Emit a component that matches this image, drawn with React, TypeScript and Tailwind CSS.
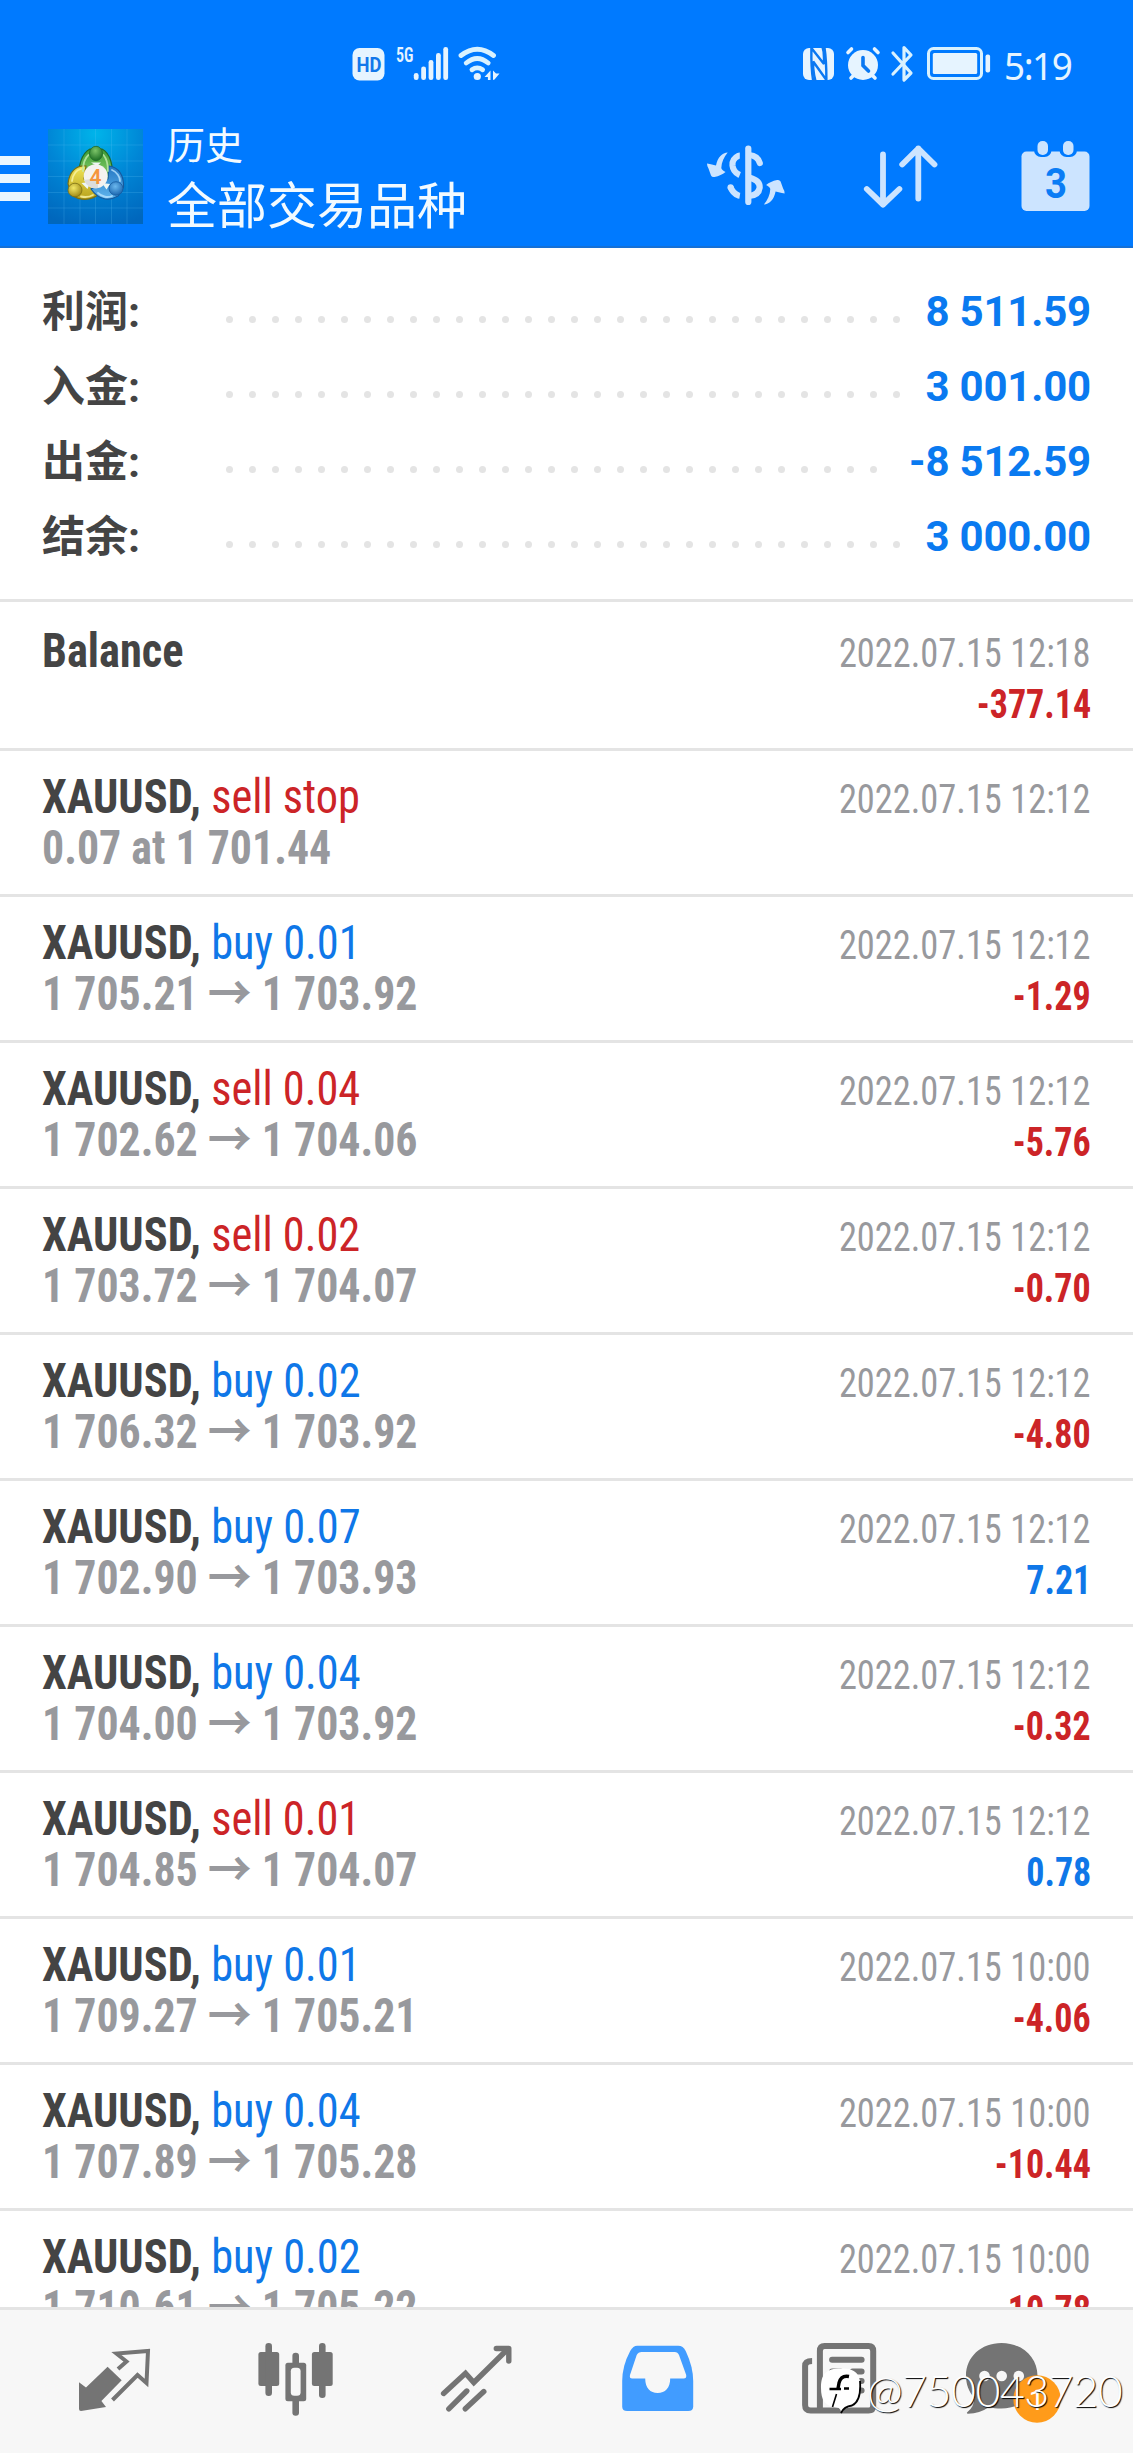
import type { ReactNode } from 'react';
import { clsx } from 'clsx';

type Deal = {
  symbol: string;
  action?: string;
  side?: 'buy' | 'sell';
  from?: string;
  to?: string;
  note?: string;
  time: string;
  profit?: string;
};

const summary = [
  { label: '利润:', value: '8 511.59', dots: 30 },
  { label: '入金:', value: '3 001.00', dots: 30 },
  { label: '出金:', value: '-8 512.59', dots: 29 },
  { label: '结余:', value: '3 000.00', dots: 30 },
];

const deals: Deal[] = [
  { symbol: 'Balance', time: '2022.07.15 12:18', profit: '-377.14' },
  { symbol: 'XAUUSD,', action: 'sell stop', side: 'sell', note: '0.07 at 1 701.44', time: '2022.07.15 12:12' },
  { symbol: 'XAUUSD,', action: 'buy 0.01', side: 'buy', from: '1 705.21', to: '1 703.92', time: '2022.07.15 12:12', profit: '-1.29' },
  { symbol: 'XAUUSD,', action: 'sell 0.04', side: 'sell', from: '1 702.62', to: '1 704.06', time: '2022.07.15 12:12', profit: '-5.76' },
  { symbol: 'XAUUSD,', action: 'sell 0.02', side: 'sell', from: '1 703.72', to: '1 704.07', time: '2022.07.15 12:12', profit: '-0.70' },
  { symbol: 'XAUUSD,', action: 'buy 0.02', side: 'buy', from: '1 706.32', to: '1 703.92', time: '2022.07.15 12:12', profit: '-4.80' },
  { symbol: 'XAUUSD,', action: 'buy 0.07', side: 'buy', from: '1 702.90', to: '1 703.93', time: '2022.07.15 12:12', profit: '7.21' },
  { symbol: 'XAUUSD,', action: 'buy 0.04', side: 'buy', from: '1 704.00', to: '1 703.92', time: '2022.07.15 12:12', profit: '-0.32' },
  { symbol: 'XAUUSD,', action: 'sell 0.01', side: 'sell', from: '1 704.85', to: '1 704.07', time: '2022.07.15 12:12', profit: '0.78' },
  { symbol: 'XAUUSD,', action: 'buy 0.01', side: 'buy', from: '1 709.27', to: '1 705.21', time: '2022.07.15 10:00', profit: '-4.06' },
  { symbol: 'XAUUSD,', action: 'buy 0.04', side: 'buy', from: '1 707.89', to: '1 705.28', time: '2022.07.15 10:00', profit: '-10.44' },
  { symbol: 'XAUUSD,', action: 'buy 0.02', side: 'buy', from: '1 710.61', to: '1 705.22', time: '2022.07.15 10:00', profit: '-10.78' },
];

function StatusBar() {
  return (
    <div className="flex h-[100px] items-start pt-11 pl-[350px]">
      <svg className="h-10 w-[152px]" viewBox="350 44 152 40" fill="#e6f4ff">
        <rect x="352.5" y="48" width="32" height="32.5" rx="7" />
        <text x="356.5" y="72" fontSize="20" fontWeight="700" fontFamily="Roboto" textLength="25" lengthAdjust="spacingAndGlyphs" fill="#1277ea">HD</text>
        <text x="396" y="62" fontSize="21" fontWeight="600" fontFamily="'Roboto Condensed'" textLength="17.5" lengthAdjust="spacingAndGlyphs">5G</text>
        <rect x="413.8" y="73" width="4.8" height="7" rx="2.3" />
        <rect x="421.2" y="66.5" width="4.8" height="13.5" rx="2.3" />
        <rect x="428.6" y="60" width="4.8" height="20" rx="2.3" />
        <rect x="436" y="53" width="4.8" height="27" rx="2.3" />
        <rect x="443.3" y="47" width="4.8" height="33" rx="2.3" />
        <g fill="none" stroke="#d9f2ff" strokeWidth="4.8" strokeLinecap="round">
          <path d="M461 55.5Q477.3 43 493.5 55.5" />
          <path d="M466.2 63Q477.3 54 488.2 63" />
          <path d="M472 69.8Q477.3 66 482.6 69.8" />
        </g>
        <circle cx="477.3" cy="76.5" r="3.6" />
        <path d="M484.5 77l6-6.5v9.5h-2.600v-3zM493 70.5v9.5l1.500-.500 5-6h-3.500z" />
      </svg>
      <svg className="ml-[298px] h-10 w-[192px]" viewBox="800 44 192 40" fill="#e6f4ff">
        <rect x="803" y="48" width="31" height="32" rx="6" />
        <g fill="none" stroke="#0a78f2" strokeWidth="2.4">
          <path d="M813.2 81Q811 68 811.4 48L824 64V58Q824 51 822.5 47" strokeLinejoin="bevel" />
          <path d="M824.4 47Q826.4 60 826.4 80L813.2 61.5V68Q814 76 815.5 81" strokeLinejoin="bevel" />
        </g>
        <circle cx="863" cy="65" r="15" />
        <g fill="none" stroke="#e6f4ff" strokeWidth="3.6" strokeLinecap="round">
          <path d="M848 52.5l3.500-3.500M874.500 49l3.500 3.500M851 78l3-3M875 78l-3-3" />
          <path d="M863 57.500v8l5.500 5.500" stroke="#0a78f2" />
        </g>
        <path d="M893 53L911 73L904 80V47.500L911 55L893 74" fill="none" stroke="#d9f2ff" strokeWidth="3.200" strokeLinecap="round" strokeLinejoin="round" />
        <rect x="928.500" y="48.500" width="53" height="30" rx="5" fill="none" stroke="#d9f2ff" strokeWidth="3" />
        <rect x="932.800" y="53" width="44.400" height="21" rx="1.500" />
        <rect x="985.500" y="54.500" width="4.600" height="18" rx="2" />
      </svg>
      <span className="ml-3 origin-left scale-x-[0.97] font-['Noto_Sans'] text-[38px] leading-[42px] tracking-[-1.5px] text-[#e6f4ff]">5:19</span>
    </div>
  );
}

function AppLogo() {
  return (
    <svg className="size-[95px]" viewBox="0 0 95 95">
      <defs>
        <radialGradient id="logoBg" cx="50%" cy="5%" r="100%">
          <stop offset="0" stopColor="#00b4ea" />
          <stop offset="0.5" stopColor="#0086d6" />
          <stop offset="1" stopColor="#0067bd" />
        </radialGradient>
        <linearGradient id="green" x1="0" y1="0" x2="0" y2="1">
          <stop offset="0" stopColor="#3d9a35" />
          <stop offset="0.5" stopColor="#6fbf5a" />
          <stop offset="1" stopColor="#2c8a34" />
        </linearGradient>
        <linearGradient id="yellow" x1="0" y1="0" x2="0" y2="1">
          <stop offset="0" stopColor="#f0e458" />
          <stop offset="1" stopColor="#b8a21c" />
        </linearGradient>
        <linearGradient id="blue" x1="0" y1="0" x2="0" y2="1">
          <stop offset="0" stopColor="#2477c4" />
          <stop offset="1" stopColor="#5fb4ec" />
        </linearGradient>
        <radialGradient id="greenHead" cx="45%" cy="30%" r="70%">
          <stop offset="0" stopColor="#7cc468" />
          <stop offset="1" stopColor="#1d6e24" />
        </radialGradient>
        <radialGradient id="yellowHead" cx="40%" cy="35%" r="70%">
          <stop offset="0" stopColor="#f2e765" />
          <stop offset="1" stopColor="#9c8512" />
        </radialGradient>
        <radialGradient id="blueHead" cx="45%" cy="35%" r="70%">
          <stop offset="0" stopColor="#6bb8ee" />
          <stop offset="1" stopColor="#1560ab" />
        </radialGradient>
      </defs>
      <rect width="95" height="95" fill="url(#logoBg)" />
      <path d="M16 0v95M32 0v95M47.500 0v95M63.500 0v95M79 0v95M0 16h95M0 32h95M0 47.500h95M0 63.500h95M0 79h95" stroke="#5fc4f5" strokeOpacity="0.22" />
      <path d="M32 50C29 38 34 24 42 20H54C62 24 66.500 38 63 50L47 58Z" fill="url(#green)" stroke="#1f6a2a" strokeWidth="1.200" />
      <path d="M38 37C28 36 21 43 20 55L24 66C32 72 43 72 51 65L46 55L36 50Z" fill="url(#yellow)" stroke="#7c7014" strokeWidth="1.200" />
      <path d="M61 37C71 38 76 47 75.500 58L70 67C60 73 50 70 43 60L50 56L60 50Z" fill="url(#blue)" stroke="#165a9e" strokeWidth="1.200" />
      <g fill="none" strokeWidth="1.800" strokeLinecap="round" strokeOpacity="0.8">
        <path d="M35 42C35 35 37 29 40.500 26M60 42C60 35 58 29 55.500 26" stroke="#c4ecb0" />
        <path d="M24 52C25 45 29 41 33 40M33 67.500Q40 69 45 66" stroke="#fbf5a8" />
        <path d="M64 41C69 43 72 48 72 52M50 64C54 68 60 69 64 67" stroke="#b8e4ff" />
      </g>
      <path d="M33.500 54l9-1-3 7zM54 54l8 1-3.500 5.500zM43 33.500h10l-4 3.500z" fill="#eef6f4" />
      <ellipse cx="48" cy="24.500" rx="6.500" ry="7.200" fill="url(#greenHead)" stroke="#1f6a2a" strokeWidth="0.800" />
      <ellipse cx="27" cy="61" rx="7" ry="6.800" fill="url(#yellowHead)" stroke="#7c7014" strokeWidth="0.800" />
      <ellipse cx="68" cy="59.500" rx="7" ry="6.800" fill="url(#blueHead)" stroke="#165a9e" strokeWidth="0.800" />
      <circle cx="47.700" cy="47.300" r="12" fill="#f4f2f0" />
      <path d="M36 51a12 12 0 0 0 14 8V49z" fill="#dcdcdc" />
      <text x="47.500" y="54.500" textAnchor="middle" fontSize="21" fontWeight="600" fontFamily="Roboto" fill="#f5953c">4</text>
    </svg>
  );
}

function Header() {
  return (
    <header className="h-[248px] shrink-0 border-b-2 border-[#1570d6] bg-[#007aff]">
      <StatusBar />
      <div className="flex h-[146px] items-center pt-[7px] pr-[38px]">
        <button className="mr-[18px] flex w-[30px] flex-col gap-[9px] pt-1">
          <span className="h-[9px] bg-[#eaf6ff]" />
          <span className="h-[9px] bg-[#eaf6ff]" />
          <span className="h-[9px] bg-[#eaf6ff]" />
        </button>
        <AppLogo />
        <div className="ml-6 flex flex-col font-['Noto_Sans_CJK_SC'] text-[#f2faff]">
          <span className="text-[38px] leading-[50px]">历史</span>
          <span className="text-[50px] leading-[68px]">全部交易品种</span>
        </div>
        <div className="ml-auto flex items-center">
          <svg className="h-[76px] w-[88px]" viewBox="702 138.500 88 76">
            <g fill="none" stroke="#cce4ff" strokeWidth="6.200">
              <path d="M748.300 148v53.500" strokeLinecap="round" />
              <path d="M739.800 155Q739 155 738.500 155.300C733 158 732.200 161 732.500 165C733 169.500 735 172 738.500 173.800L739.800 174.300" />
              <path d="M730.500 186.500C732 191 735 193.500 738.500 195L739.800 195.200" />
              <path d="M749 154.500C755 155 758.500 157.500 759.800 162.500" strokeLinecap="round" />
              <path d="M749 177C756.500 179 760 182 759.700 187C759 192.500 755 195 749 195.500" />
            </g>
            <circle cx="730.600" cy="186.800" r="3.100" fill="#cce4ff" />
            <g fill="#cce4ff">
              <path id="swap" d="M727.700 152C722.500 152 717.500 157 716 165C713 164.500 711 163.500 707 163Q707 166 708.500 168L711 175Q712 177 714.500 176.500C719 175.500 722.500 174 725.500 171.500C723 170 721.500 169 721.300 167.500C721.500 161.500 724 156.500 727.700 152Z" />
              <use href="#swap" transform="rotate(180 745.800 178)" />
            </g>
          </svg>
          <svg className="ml-[70px] h-[76px] w-20" viewBox="860 138.500 80 76" fill="none" stroke="#cce4ff" strokeWidth="5.800" strokeLinecap="round" strokeLinejoin="round">
            <path d="M883 154v50M866.800 188.500L883 204.200L899.400 188.500" />
            <path d="M918.300 198v-50M902.200 164L918.300 148L934.500 164" />
          </svg>
          <svg className="ml-[75px] h-[76px] w-20" viewBox="1015 138.500 80 76">
            <rect x="1021.500" y="151" width="68" height="59.500" rx="5" fill="#cce4ff" />
            <rect x="1034" y="138" width="17.500" height="18.500" rx="7" fill="#007aff" />
            <rect x="1059.500" y="138" width="17.500" height="18.500" rx="7" fill="#007aff" />
            <rect x="1037.500" y="140.500" width="10.500" height="14" rx="5" fill="#cce4ff" />
            <rect x="1063" y="140.500" width="10.500" height="14" rx="5" fill="#cce4ff" />
            <text x="1045" y="197.500" fontSize="42" fontWeight="700" fontFamily="Roboto" textLength="22" lengthAdjust="spacingAndGlyphs" fill="#0a7cf5">3</text>
          </svg>
        </div>
      </div>
    </header>
  );
}

function Summary() {
  return (
    <section className="h-[351px] shrink-0 pt-[26px] pr-[42px] pl-[42px] font-['Roboto','Noto_Sans_CJK_SC',sans-serif] font-bold">
      {summary.map(row => (
        <div key={row.label} className="flex h-[75px] items-center leading-[75px]">
          <span className="w-[183.500px] pt-px text-[43px] text-[#444]">{row.label}</span>
          <div className="mt-4 flex gap-4">
            {Array.from({ length: row.dots }, (_, i) => (
              <i key={i} className="size-[7px] rounded-full bg-[#e4e4e4]" />
            ))}
          </div>
          <span className="ml-auto text-[42px] tracking-[-0.2px] whitespace-nowrap text-[#0a7af0]">{row.value}</span>
        </div>
      ))}
    </section>
  );
}

function DealRow({ deal, first }: { deal: Deal; first: boolean }) {
  return (
    <li className={clsx('border-t-3 border-[#e4e4e4] pr-[42px] pl-[42px]', first ? 'h-[149px] pt-[23px]' : 'h-[146px] pt-5')}>
      <div className="flex h-[51px] items-baseline justify-between text-[48px] leading-[51px]">
        <span className="origin-left scale-x-[0.925]">
          <b className="text-[#444]">{deal.symbol}</b>
          {deal.action && (
            <span className={deal.side === 'buy' ? 'text-[#0f77e8]' : 'text-[#cc2427]'}> {deal.action}</span>
          )}
        </span>
        <span className="origin-right scale-x-[0.91] text-[40px] text-[#98999d]">{deal.time}</span>
      </div>
      <div className="flex h-[51px] items-baseline justify-between text-[48px] leading-[51px] font-bold">
        <span className="origin-left scale-x-[0.913] text-[#98999d]">
          {deal.note ?? (!deal.from && '\u00a0')}
          {deal.from && (
            <>
              {deal.from} <span className="font-['Noto_Sans_CJK_SC'] leading-[0]">→</span> {deal.to}
            </>
          )}
        </span>
        <span className={clsx('origin-right scale-x-[0.9] text-[40px]', deal.profit?.startsWith('-') ? 'text-[#cc2427]' : 'text-[#0f77e8]')}>
          {deal.profit}
        </span>
      </div>
    </li>
  );
}

function Tab({ viewBox, children }: { viewBox: string; children: ReactNode }) {
  return (
    <button className="size-20">
      <svg className="size-20 overflow-visible" viewBox={viewBox} fill="#747474">
        {children}
      </svg>
    </button>
  );
}

function TabBar() {
  return (
    <nav className="relative flex h-[146px] shrink-0 items-start justify-between border-t-3 border-[#e4e4e4] bg-[#f7f7f7] px-[75px] pt-[30px]">
      <Tab viewBox="75 2340 80 80">
        <path d="M79 2382.300L86 2387.500L107.600 2366.700L121.700 2380.300L101.400 2401L106 2407L81 2411Q79 2411 79 2409Z" />
        <path d="M118 2369L126.500 2361.500L116.500 2353.500L148 2351L146.500 2383L137.500 2375L112.500 2400" fill="none" stroke="#747474" strokeWidth="4" />
      </Tab>
      <Tab viewBox="255.600 2340 80 80">
        <rect x="258" y="2352" width="20.800" height="34" rx="2.500" />
        <rect x="265" y="2343" width="6.600" height="53" rx="3.200" />
        <rect x="311.500" y="2352" width="20.800" height="34" rx="2.500" />
        <rect x="318.600" y="2343" width="6.600" height="55" rx="3.200" />
        <rect x="292" y="2352.700" width="6.600" height="63" rx="3.200" />
        <rect x="285" y="2362.700" width="20.800" height="38.600" rx="2.500" />
        <rect x="290.400" y="2367.800" width="9.800" height="28" rx="3.500" fill="#f7f7f7" />
      </Tab>
      <Tab viewBox="436.200 2340 80 80">
        <g fill="none" stroke="#747474" strokeWidth="5.400">
          <path d="M443.800 2393.500L465.700 2373.300L474 2382.500L507 2350" strokeLinecap="round" />
          <path d="M496.500 2348.500H509V2361" strokeLinecap="round" strokeLinejoin="round" />
          <path d="M449 2408.800L467 2391M465.500 2408.800L484 2391.500" strokeLinecap="round" />
        </g>
      </Tab>
      <Tab viewBox="616.800 2340 80 80">
        <path d="M637 2345.700H678Q683 2345.700 685.500 2351Q693 2367 693 2381V2406.500Q693 2411 688 2411H627Q622 2411 622 2406.500V2381Q622 2366 630 2351Q633 2345.700 637 2345.700Z" fill="#419cff" />
        <path d="M641.500 2352H674.500Q677.500 2352 678.800 2355L686 2375Q686.500 2378.500 683.500 2378.500H670C670 2388 665 2393 657.500 2393S645 2388 645 2378.500H632Q629 2378.500 629.800 2375L636.500 2355Q638 2352 641.500 2352Z" fill="#f7f7f7" />
      </Tab>
      <Tab viewBox="797.400 2340 80 80">
        <g fill="none" stroke="#747474" strokeWidth="6" strokeLinecap="round">
          <path d="M820.300 2410.500V2351Q820.300 2346 825 2346H869Q873.600 2346 873.600 2351V2406Q873.600 2410.500 869 2410.500H811Q805.500 2410.500 805.500 2405V2366Q805.500 2361 812.500 2361" strokeLinecap="butt" />
          <path d="M832.500 2359.700H862M832.500 2371.500H841M853 2371.500H862M832.500 2381H841M853 2381H862M853 2390.500H862" />
        </g>
      </Tab>
      <Tab viewBox="978 2340 80 80">
        <path d="M1001.500 2343C1022 2343 1037.500 2357 1037.500 2375.700C1037.500 2394 1022 2408.500 1001.500 2408.500C996 2408.500 993 2408 989 2407Q980 2413.500 968 2413.700Q966 2413.500 967.500 2412Q974 2407 974.500 2398C968.500 2391.500 966 2384 966 2375.700C966 2357 981 2343 1001.500 2343Z" />
        <circle cx="984.500" cy="2376" r="5.300" fill="#f7f7f7" />
        <circle cx="1001.700" cy="2376" r="5.300" fill="#f7f7f7" />
        <circle cx="1018.800" cy="2376" r="5.300" fill="#f7f7f7" />
        <circle cx="1037" cy="2399" r="23.700" fill="#ff9b1a" />
        <text x="1036.500" y="2409.500" textAnchor="middle" fontSize="28" fontFamily="Roboto" fill="#fff">1</text>
      </Tab>
      <div className="absolute top-[57px] left-[820px] flex items-center">
        <svg className="h-12 w-[42px]" viewBox="820 2370 42 48">
          <path d="M841 2371.500C856 2371.500 860.500 2377 860.500 2391C860.500 2402 857 2408 850 2410Q845 2411 841 2416Q841 2411 837 2410.500C825 2409.500 821 2403 821 2391C821 2377 826 2371.500 841 2371.500Z" fill="#fff" />
          <g fill="none" stroke="#000">
            <path d="M849 2379.500Q841 2378 839 2386L838 2391.500" strokeWidth="3.400" />
            <path d="M829.500 2392H841M844 2391.500H849" strokeWidth="2.400" />
            <path d="M836.500 2397L832.500 2410" strokeWidth="1.600" />
            <path d="M860 2384Q861.500 2404 852 2408.500Q844 2409.500 841 2416" strokeWidth="1.800" />
          </g>
        </svg>
        <span className="ml-[5px] font-['Lato'] text-[43px] leading-[48px] font-light tracking-[-0.5px] text-white [text-shadow:1px_1px_1px_#000]">
          @750043720
        </span>
      </div>
    </nav>
  );
}

export default function App() {
  return (
    <div className="flex h-[2453px] w-[1133px] flex-col overflow-hidden bg-white font-['Roboto_Condensed','Noto_Sans_CJK_SC',sans-serif]">
      <Header />
      <Summary />
      <ul className="min-h-0 flex-1 overflow-hidden">
        {deals.map((deal, i) => (
          <DealRow key={i} deal={deal} first={i === 0} />
        ))}
      </ul>
      <TabBar />
    </div>
  );
}
